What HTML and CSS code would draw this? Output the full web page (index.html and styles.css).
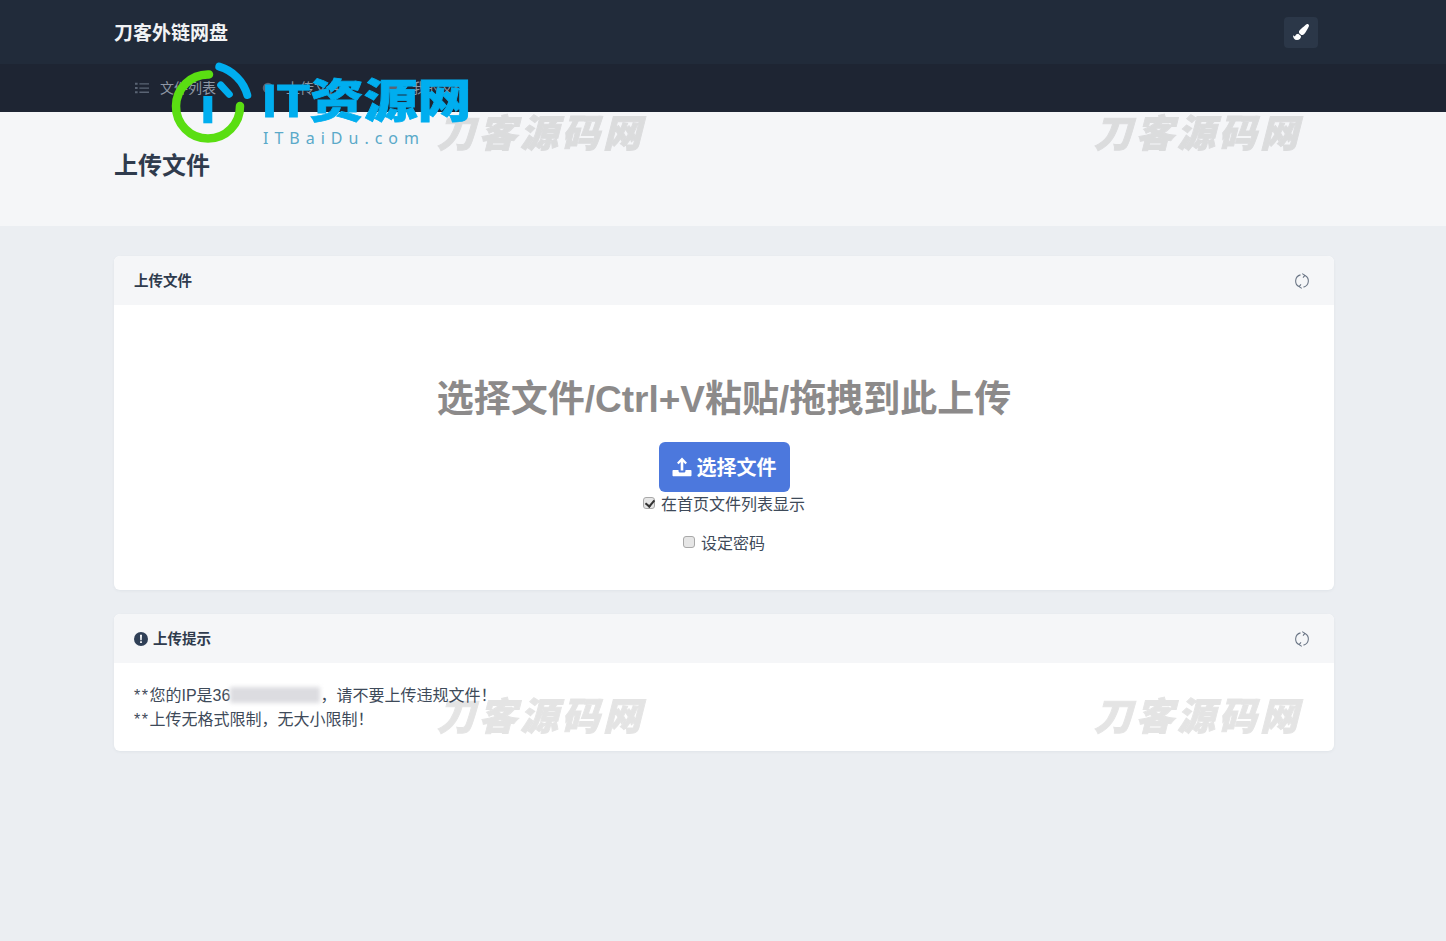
FILE: index.html
```html
<!DOCTYPE html>
<html lang="zh-CN">
<head>
  <meta charset="UTF-8">
  <meta name="viewport" content="width=device-width, initial-scale=1.0">
  <title>上传文件 - 刀客外链网盘</title>
  <link rel="stylesheet" href="styles.css">
</head>
<body>
  <header class="topbar">
    <div class="wrap topbar-in">
      <a class="brand">刀客外链网盘</a>
      <button class="theme-btn" type="button">
        <svg viewBox="0 0 512 512" width="16" height="16"><path fill="#fff" d="M167.020 309.340c-40.120 2.580-76.530 17.860-97.190 72.300-2.350 6.210-8 9.980-14.590 9.980-11.110 0-45.460-27.670-55.250-34.350C0 439.620 37.930 512 128 512c75.860 0 128-43.770 128-120.190 0-3.110-.65-6.080-.97-9.130l-88.010-73.340zM457.890 0c-15.160 0-29.370 6.710-40.210 16.450C213.270 199.050 192 203.340 192 257.090c0 13.700 3.250 26.760 8.730 38.700l63.820 53.180c7.210 1.800 14.640 3.030 22.390 3.030 62.110 0 98.110-45.470 211.160-256.460 7.380-14.350 13.900-29.850 13.900-45.990C512 20.640 486 0 457.890 0z"/></svg>
      </button>
    </div>
  </header>
  <nav class="subnav">
    <div class="wrap subnav-in">
      <a class="nav-item">
        <svg viewBox="0 0 16 16" width="14" height="14"><path fill="#5a6474" d="M0 2h3v2.400H0zM5 2.500h11v1.500H5zM0 6.800h3v2.400H0zM5 7.300h11v1.500H5zM0 11.600h3V14H0zM5 12.100h11v1.500H5z"/></svg>
        <span>文件列表</span>
      </a>
      <a class="nav-item">
        <svg viewBox="0 0 16 16" width="14" height="14"><circle cx="8" cy="8" r="6" fill="#5a6474"/></svg>
        <span>上传文件</span>
      </a>
      <a class="nav-item">
        <svg viewBox="0 0 16 16" width="14" height="14"><path fill="#5a6474" d="M1 3h5l1.500 2H15v8H1z"/></svg>
        <span>我的文件</span>
      </a>
    </div>
  </nav>

  <section class="hero">
    <div class="wrap">
      <h1 class="hero-title">上传文件</h1>
    </div>
  </section>

  <main class="wrap content">
    <div class="card">
      <div class="card-head">
        <h3 class="card-title">上传文件</h3>
        <svg class="refresh" viewBox="0 0 16 16" width="16" height="16"><path fill="none" stroke="#6b7686" stroke-width="1.100" d="M6.500 1.900A6.300 6.300 0 0 0 5 13.600M9.500 14.100A6.300 6.300 0 0 0 11 2.400"/><path fill="none" stroke="#6b7686" stroke-width="1.100" d="M8.200.6 10.900 2.300 9 4.700M7.800 15.400 5.100 13.700 7 11.300"/></svg>
      </div>
      <div class="card-body upload-body">
        <h2 class="drop-text">选择文件/Ctrl+V粘贴/拖拽到此上传</h2>
        <button class="upload-btn" type="button">
          <svg viewBox="0 0 20 20" width="20" height="20"><path fill="#fff" d="M10 .5 15 5.800 13.400 7.300 11.300 5.100V13.500H8.700V5.100L6.600 7.300 5 5.800zM1.500 13h5v.800c0 1 .6 1.800 1.600 1.800h3.800c1 0 1.600-.8 1.600-1.800V13h5c.6 0 1 .4 1 1v4.200c0 .6-.4 1-1 1h-17c-.6 0-1-.4-1-1V14c0-.6.400-1 1-1z"/></svg>
          <span class="btn-label">选择文件</span>
        </button>
        <label class="check-row first"><input type="checkbox" checked> 在首页文件列表显示</label>
        <label class="check-row"><input type="checkbox"> 设定密码</label>
      </div>
    </div>

    <div class="card">
      <div class="card-head">
        <h3 class="card-title">
          <svg viewBox="0 0 16 16" width="14" height="14"><circle cx="8" cy="8" r="8" fill="#2f3f56"/><path fill="#fff" d="M6.900 3h2.200l-.3 6.300H7.200zM7 10.500h2v2H7z"/></svg>
          上传提示
        </h3>
        <svg class="refresh" viewBox="0 0 16 16" width="16" height="16"><path fill="none" stroke="#6b7686" stroke-width="1.100" d="M6.500 1.900A6.300 6.300 0 0 0 5 13.600M9.500 14.100A6.300 6.300 0 0 0 11 2.400"/><path fill="none" stroke="#6b7686" stroke-width="1.100" d="M8.200.6 10.900 2.300 9 4.700M7.800 15.400 5.100 13.700 7 11.300"/></svg>
      </div>
      <div class="card-body tips">
        <p><span class="stars">**</span>您的IP是36<span class="ip-mask"></span>，请不要上传违规文件！</p>
        <p><span class="stars">**</span>上传无格式限制，无大小限制！</p>
      </div>
    </div>
  </main>

  <!-- 水印 -->
  <div class="mark m1">刀客源码网</div>
  <div class="mark m2">刀客源码网</div>
  <div class="mark m3">刀客源码网</div>
  <div class="mark m4">刀客源码网</div>

  <div class="it-logo">
    <svg class="it-icon" viewBox="0 0 90 90" width="90" height="90">
      <path fill="none" stroke="#5ade12" stroke-width="8.500" stroke-linecap="round" d="M41 14.500A32 32 0 1 0 72 46"/>
      <path fill="none" stroke="#00aeef" stroke-width="8" stroke-linecap="round" d="M51.300 6.700A41 41 0 0 1 79.300 35"/>
      <path fill="none" stroke="#00aeef" stroke-width="7" stroke-linecap="round" d="M52.700 25 61.300 34.300"/>
      <path fill="#00aeef" d="M35.300 36h9v27.300h-9z"/>
    </svg>
    <div class="it-name">IT资源网</div>
    <div class="it-url">ITBaiDu.com</div>
  </div>
</body>
</html>
```

FILE: styles.css
```css
* {
  box-sizing: border-box;
}
html, body {
  margin: 0;
  padding: 0;
}
body {
  min-height: 941px;
  background-color: #ebeef2;
  color: #3e4a59;
  font-family: "Liberation Sans", "Noto Sans CJK SC", sans-serif;
  font-size: 16px;
  line-height: 24px;
  position: relative;
}
.wrap {
  width: 1220px;
  margin-left: 114px;
}

/* top */
.topbar {
  height: 64px;
  background-color: #212b3a;
}
.topbar-in {
  height: 100%;
  display: flex;
  align-items: center;
  justify-content: space-between;
  padding-right: 16px;
}
.brand {
  color: #f2f3f5;
  font-size: 19px;
  font-weight: 700;
  padding-top: 4px;
}
.theme-btn {
  width: 34px;
  height: 31px;
  padding: 0;
  border: 0;
  border-radius: 4px;
  background-color: #2b3748;
  display: flex;
  align-items: center;
  justify-content: center;
}
.subnav {
  height: 48px;
  background-color: #1e2533;
}
.subnav-in {
  height: 100%;
  display: flex;
  align-items: center;
  padding-left: 21px;
  gap: 45px;
}
.nav-item {
  display: flex;
  align-items: center;
  gap: 11px;
  color: #8f97a4;
  font-size: 14px;
}

.hero {
  height: 114px;
  background-color: #f5f6f8;
  padding-top: 37px;
}
.hero-title {
  margin: 0;
  font-size: 24px;
  line-height: 34px;
  color: #2f3b4d;
  font-weight: 700;
}

/* cards */
.content {
  padding-top: 30px;
}
.card {
  background-color: #fff;
  border-radius: 6px;
  margin-bottom: 24px;
  overflow: hidden;
  box-shadow: 0 1px 3px rgba(50, 60, 80, 0.06);
}
.card-head {
  height: 49px;
  background-color: #f5f6f8;
  display: flex;
  align-items: center;
  justify-content: space-between;
  padding: 0 24px 0 20px;
}
.card-title {
  margin: 0;
  display: flex;
  align-items: center;
  gap: 5px;
  font-size: 14.500px;
  font-weight: 700;
  color: #2f3b4d;
}
.upload-body {
  height: 285px;
  padding-top: 70px;
  text-align: center;
  display: flex;
  flex-direction: column;
  align-items: center;
}
.drop-text {
  margin: 0 0 17px;
  font-size: 37px;
  line-height: 50px;
  font-weight: 700;
  color: #8c8a8a;
}
.upload-btn {
  width: 131px;
  height: 50px;
  border: 0;
  border-radius: 6px;
  background-color: #4c78dd;
  color: #fff;
  font-family: inherit;
  font-size: 20px;
  font-weight: 700;
  display: flex;
  align-items: center;
  justify-content: center;
  gap: 5px;
  padding: 0;
}
.btn-label {
  padding-bottom: 2px;
}
.check-row {
  display: flex;
  align-items: center;
  gap: 6px;
  height: 24px;
  margin-top: 15px;
  font-size: 16px;
}
.check-row.first {
  margin-top: 1px;
}
.check-row input {
  appearance: none;
  width: 12px;
  height: 12px;
  margin: -5px 0 0;
  border: 1px solid #a9a9a9;
  border-radius: 3px;
  background-color: #e6e6e6;
  position: relative;
}
.check-row input:checked::after {
  content: "";
  position: absolute;
  left: 3px;
  top: 0;
  width: 4px;
  height: 7px;
  border: solid #333;
  border-width: 0 2px 2px 0;
  transform: rotate(40deg);
}
.tips {
  padding: 21px 20px 19px;
}
.tips p {
  margin: 0;
}
.stars {
  letter-spacing: 1.500px;
}
.ip-mask {
  display: inline-block;
  width: 90px;
  height: 16px;
  vertical-align: -2px;
  background-color: #dcdce0;
  filter: blur(2px);
}

/* overlays */
.mark {
  position: absolute;
  width: 220px;
  color: #000;
  opacity: 0.1;
  font-size: 38px;
  line-height: 40px;
  font-weight: 900;
  font-style: italic;
  letter-spacing: 3.500px;
  white-space: nowrap;
  -webkit-text-stroke: 1px #000;
  pointer-events: none;
}
.m1 { left: 437px; top: 114px; }
.m2 { left: 1094px; top: 114px; }
.m3 { left: 437px; top: 697px; }
.m4 { left: 1094px; top: 697px; }

.it-logo {
  position: absolute;
  left: 168px;
  top: 60px;
  width: 320px;
  height: 95px;
  pointer-events: none;
}
.it-icon {
  position: absolute;
  left: 0;
  top: 0;
}
.it-name {
  position: absolute;
  left: 94px;
  top: 11px;
  color: #00aeef;
  font-size: 46px;
  line-height: 60px;
  font-weight: 900;
  white-space: nowrap;
  -webkit-text-stroke: 0.800px #00aeef;
  transform: scaleX(1.170);
  transform-origin: left center;
}
.it-url {
  position: absolute;
  left: 95px;
  top: 68px;
  color: #5aa9c9;
  font-family: "Noto Sans", sans-serif;
  font-size: 16px;
  line-height: 20px;
  letter-spacing: 6px;
  white-space: nowrap;
}
```
